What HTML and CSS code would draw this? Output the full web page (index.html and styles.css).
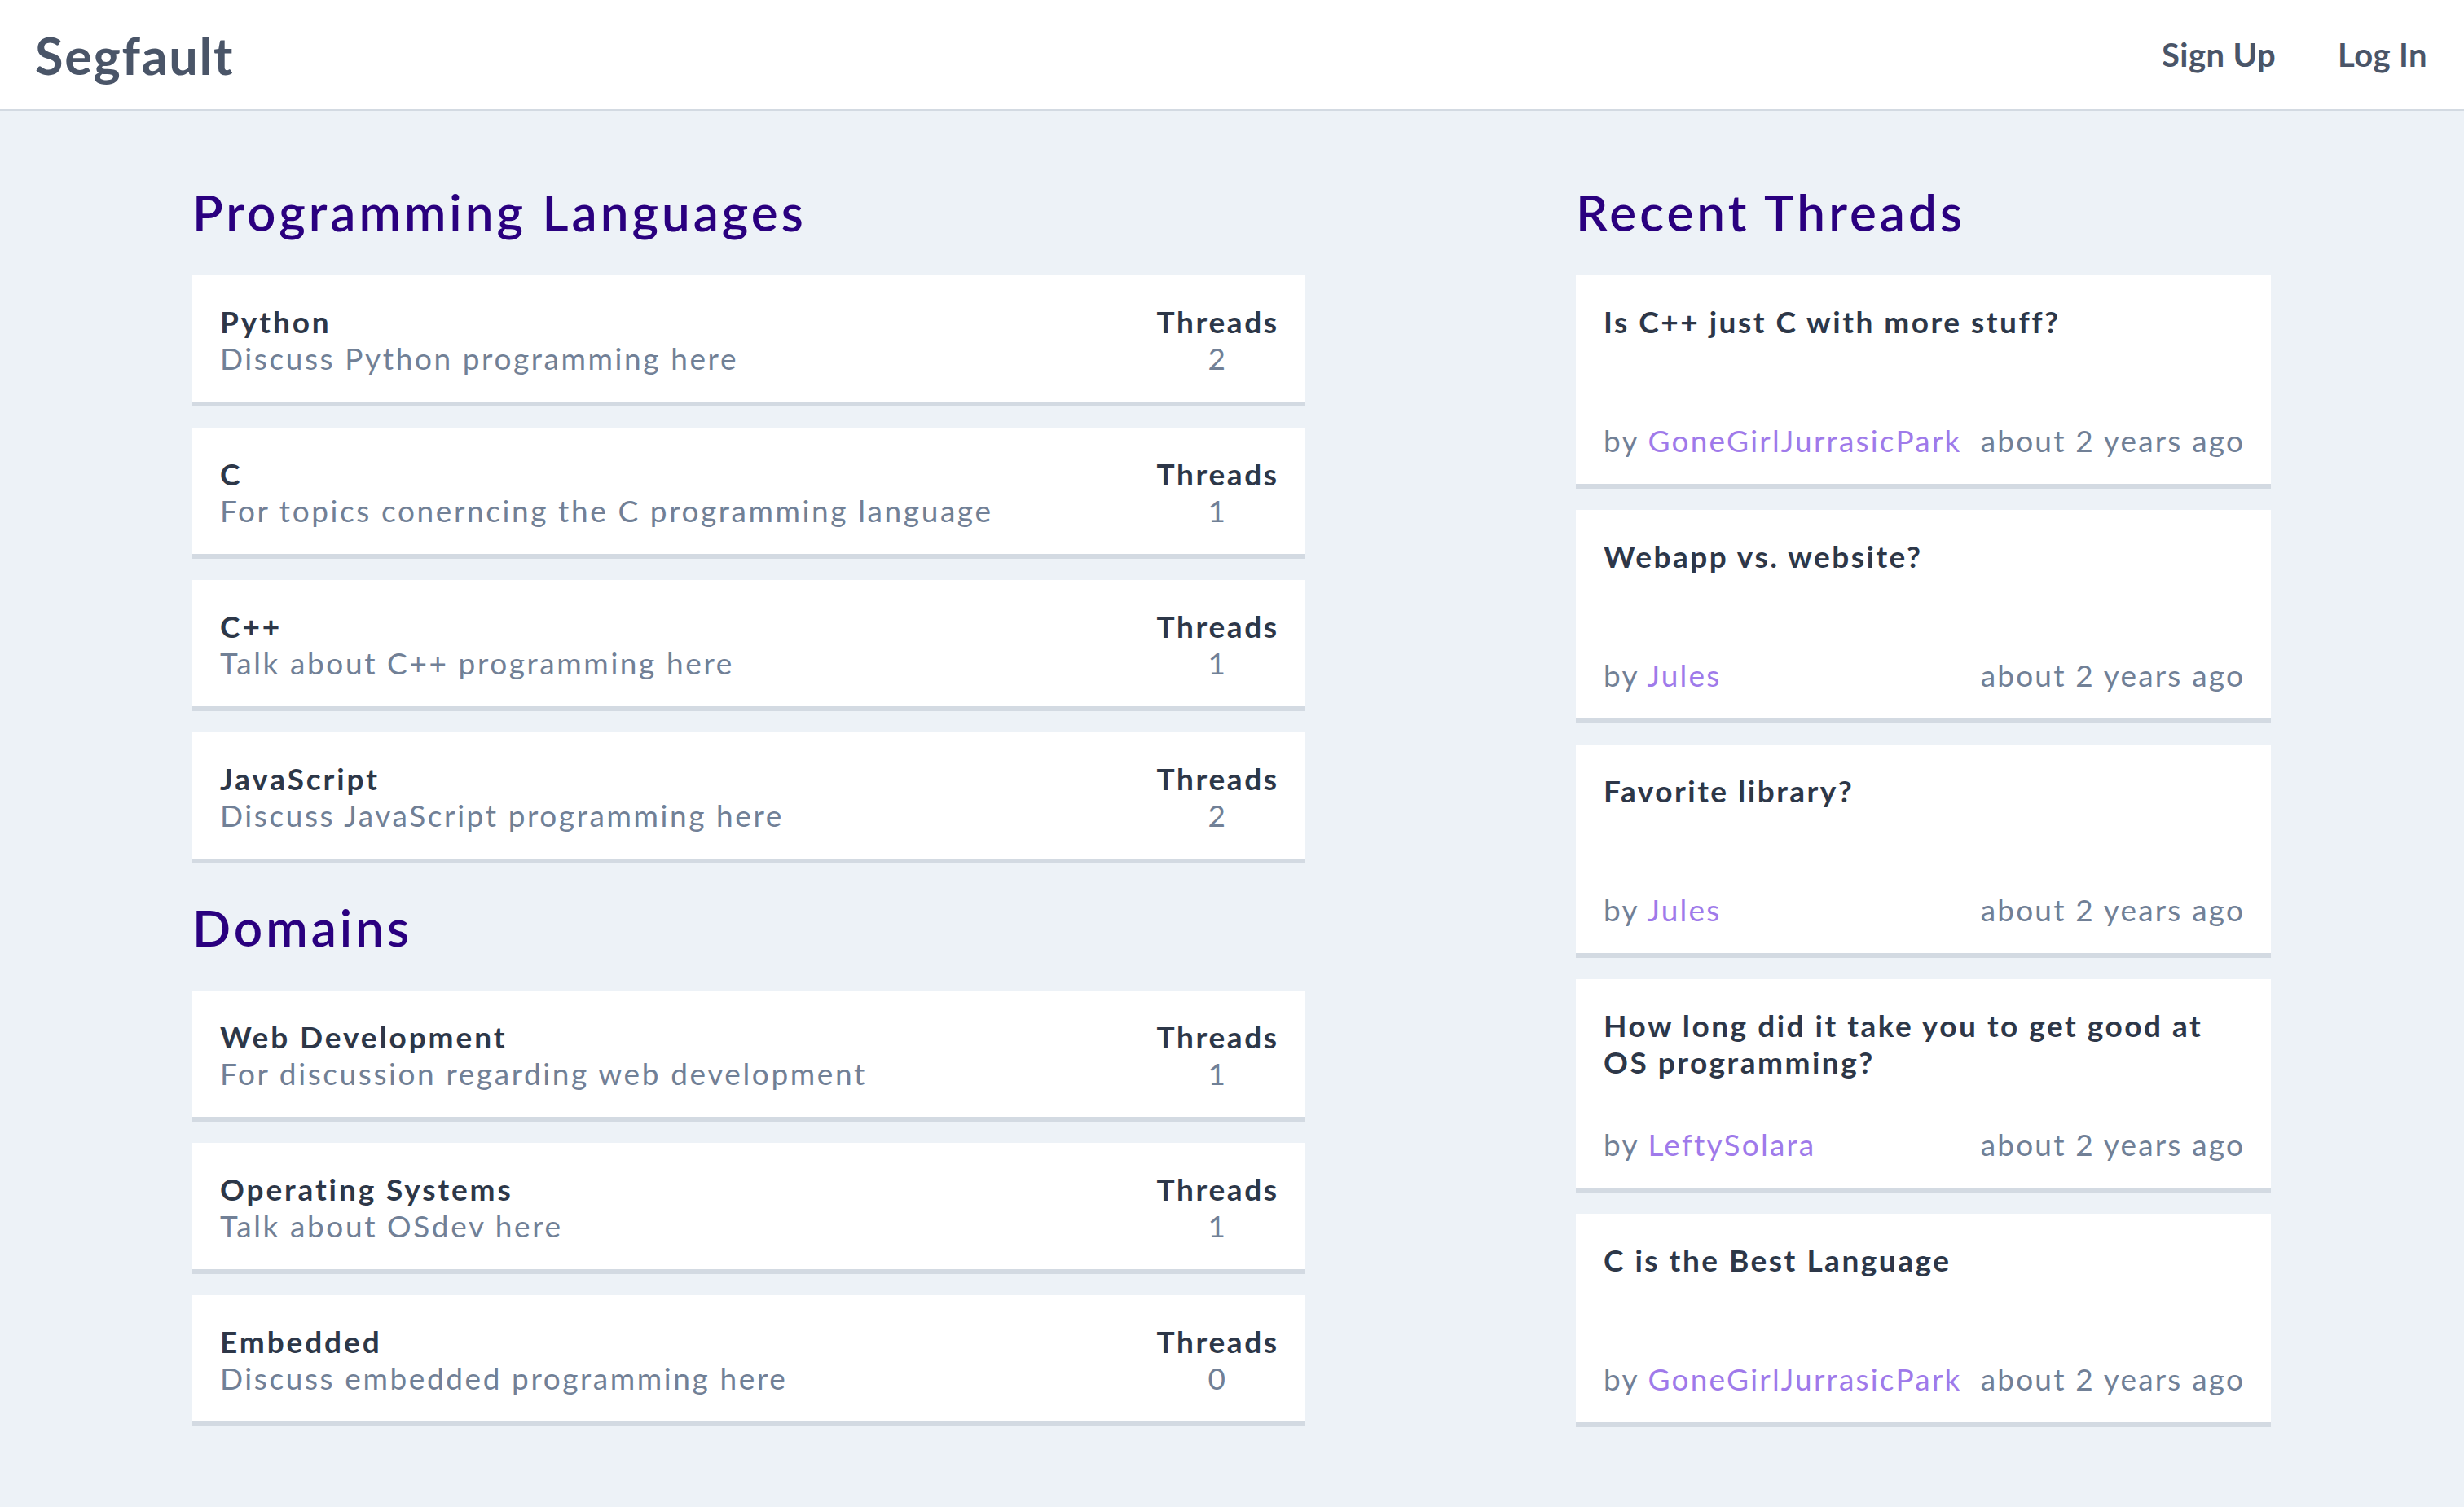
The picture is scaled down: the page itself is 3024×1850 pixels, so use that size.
FILE: index.html
```html
<!DOCTYPE html>
<html lang="en">
<head>
<meta charset="utf-8">
<title>Segfault</title>
<link rel="stylesheet" href="styles.css">
</head>
<body>
<header class="topbar">
  <a class="brand" href="#">Segfault</a>
  <nav class="nav">
    <a class="nav-link" href="#">Sign Up</a>
    <a class="nav-link" href="#">Log In</a>
  </nav>
</header>
<main class="page">
  <div class="col-left">
    <section class="section">
      <h2 class="section-title">Programming Languages</h2>
      <div class="list">
        <div class="forum-card">
          <div class="forum-info"><div class="forum-name">Python</div><div class="forum-desc">Discuss Python programming here</div></div>
          <div class="forum-count"><div class="count-label">Threads</div><div class="count-num">2</div></div>
        </div>
        <div class="forum-card">
          <div class="forum-info"><div class="forum-name">C</div><div class="forum-desc">For topics conerncing the C programming language</div></div>
          <div class="forum-count"><div class="count-label">Threads</div><div class="count-num">1</div></div>
        </div>
        <div class="forum-card">
          <div class="forum-info"><div class="forum-name">C++</div><div class="forum-desc">Talk about C++ programming here</div></div>
          <div class="forum-count"><div class="count-label">Threads</div><div class="count-num">1</div></div>
        </div>
        <div class="forum-card">
          <div class="forum-info"><div class="forum-name">JavaScript</div><div class="forum-desc">Discuss JavaScript programming here</div></div>
          <div class="forum-count"><div class="count-label">Threads</div><div class="count-num">2</div></div>
        </div>
      </div>
    </section>
    <section class="section">
      <h2 class="section-title">Domains</h2>
      <div class="list">
        <div class="forum-card">
          <div class="forum-info"><div class="forum-name">Web Development</div><div class="forum-desc">For discussion regarding web development</div></div>
          <div class="forum-count"><div class="count-label">Threads</div><div class="count-num">1</div></div>
        </div>
        <div class="forum-card">
          <div class="forum-info"><div class="forum-name">Operating Systems</div><div class="forum-desc">Talk about OSdev here</div></div>
          <div class="forum-count"><div class="count-label">Threads</div><div class="count-num">1</div></div>
        </div>
        <div class="forum-card">
          <div class="forum-info"><div class="forum-name">Embedded</div><div class="forum-desc">Discuss embedded programming here</div></div>
          <div class="forum-count"><div class="count-label">Threads</div><div class="count-num">0</div></div>
        </div>
      </div>
    </section>
  </div>
  <aside class="col-right">
    <h2 class="section-title">Recent Threads</h2>
    <div class="list">
      <div class="thread-card">
        <div class="thread-title">Is C++ just C with more stuff?</div>
        <div class="thread-meta"><span>by <a class="author" href="#">GoneGirlJurrasicPark</a></span><span>about 2 years ago</span></div>
      </div>
      <div class="thread-card">
        <div class="thread-title">Webapp vs. website?</div>
        <div class="thread-meta"><span>by <a class="author" href="#">Jules</a></span><span>about 2 years ago</span></div>
      </div>
      <div class="thread-card">
        <div class="thread-title">Favorite library?</div>
        <div class="thread-meta"><span>by <a class="author" href="#">Jules</a></span><span>about 2 years ago</span></div>
      </div>
      <div class="thread-card">
        <div class="thread-title">How long did it take you to get good at OS programming?</div>
        <div class="thread-meta"><span>by <a class="author" href="#">LeftySolara</a></span><span>about 2 years ago</span></div>
      </div>
      <div class="thread-card">
        <div class="thread-title">C is the Best Language</div>
        <div class="thread-meta"><span>by <a class="author" href="#">GoneGirlJurrasicPark</a></span><span>about 2 years ago</span></div>
      </div>
    </div>
  </aside>
</main>
</body>
</html>
```
FILE: styles.css
```css
* { box-sizing: border-box; }
html, body { margin: 0; padding: 0; }
body {
  background: #edf2f7;
  font-family: Lato, "Noto Sans", sans-serif;
  color: #2d3748;
  min-height: 1850px;
}
a { text-decoration: none; color: inherit; }

.topbar {
  height: 136px;
  background: #ffffff;
  border-bottom: 2px solid #d3dae2;
  display: flex;
  align-items: center;
  justify-content: space-between;
  padding: 0 45px 0 43px;
}
.brand {
  font-size: 63px;
  font-weight: 700;
  color: #4a5568;
  letter-spacing: 1.7px;
}
.nav { display: flex; gap: 76px; }
.nav-link {
  font-size: 40px;
  font-weight: 700;
  color: #4a5568;
  letter-spacing: 0.4px;
}

.page {
  display: flex;
  justify-content: space-between;
  align-items: flex-start;
  padding: 88px 237px 0 236px;
}
.col-left { width: 1365px; display: flex; flex-direction: column; gap: 42px; }
.col-right { width: 853px; }

.section-title {
  margin: 0 0 42px 0;
  font-size: 62px;
  line-height: 72px;
  font-weight: 600;
  color: #2a007f;
  letter-spacing: 4px;
}
.list { display: flex; flex-direction: column; gap: 26px; }

.forum-card {
  background: #ffffff;
  border-bottom: 6px solid #d3dae2;
  padding: 34px 34px 31px 34px;
  display: flex;
  justify-content: space-between;
  align-items: flex-start;
  font-size: 37px;
  line-height: 45px;
}
.forum-name { font-weight: 700; color: #2d3748; letter-spacing: 2.9px; }
.forum-desc { color: #718096; letter-spacing: 2.6px; }
.forum-count { text-align: center; }
.count-label { font-weight: 700; color: #2d3748; letter-spacing: 2.6px; margin-right: -2.6px; }
.count-num { color: #718096; }

.thread-card {
  background: #ffffff;
  border-bottom: 6px solid #d3dae2;
  padding: 34px 34px 31px 34px;
  font-size: 37px;
  line-height: 45px;
}
.thread-title {
  height: 146px;
  font-weight: 700;
  color: #2d3748;
  letter-spacing: 2.5px;
}
.thread-meta {
  display: flex;
  justify-content: space-between;
  color: #718096;
  letter-spacing: 2.2px;
  margin-right: -2.2px;
}
.author { color: #9f7aea; }
```
